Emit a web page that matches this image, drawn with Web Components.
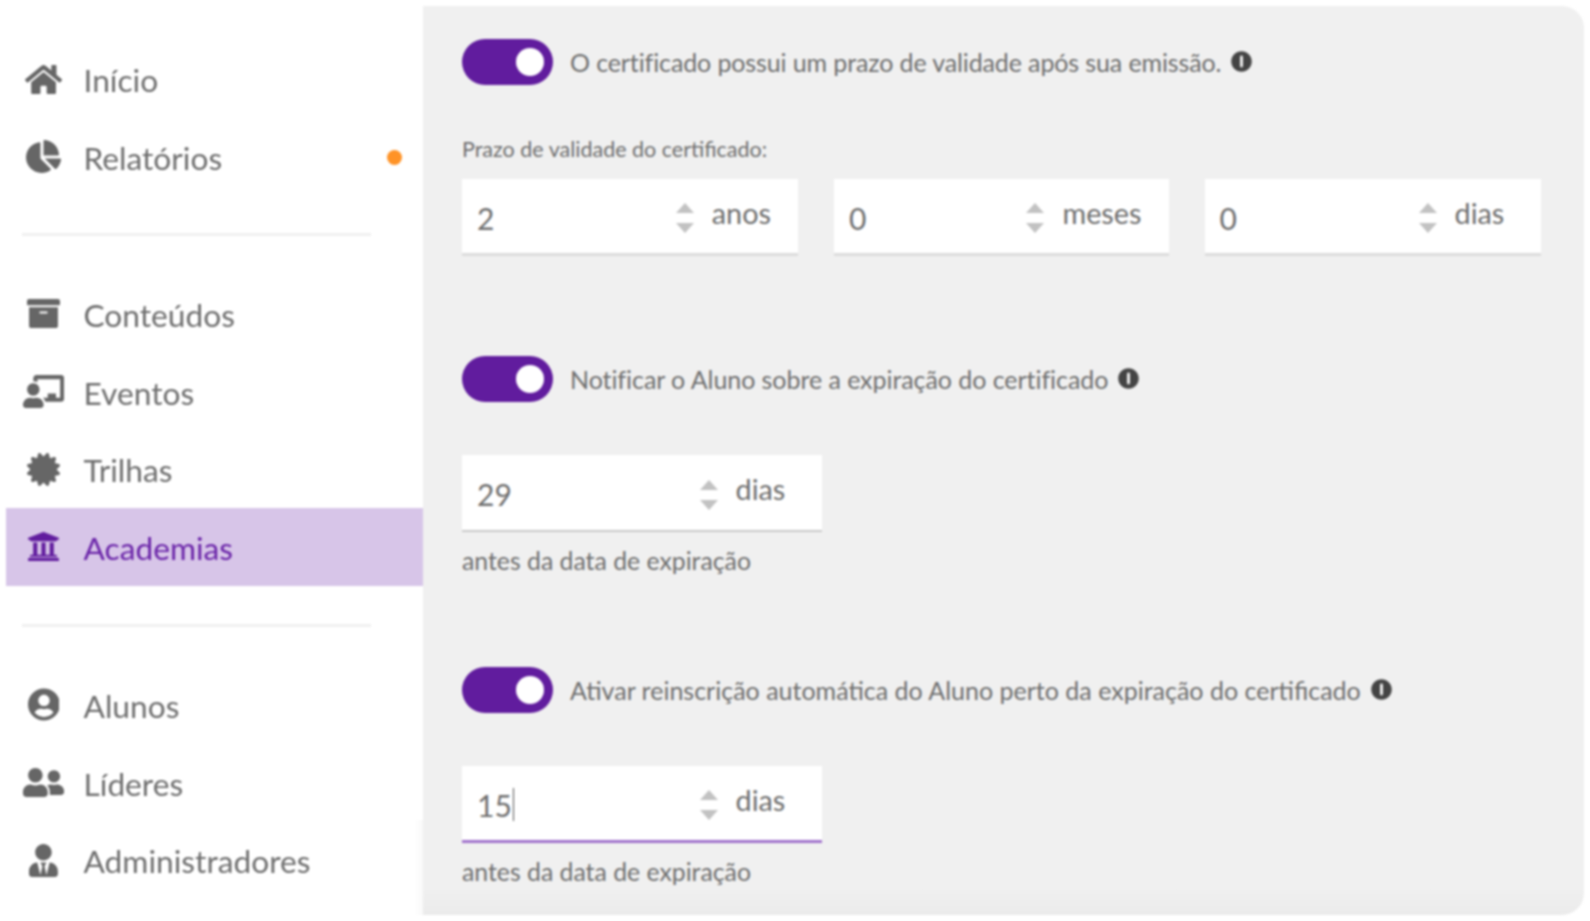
<!DOCTYPE html>
<html lang="pt-BR">
<head>
<meta charset="utf-8">
<title>Certificado</title>
<style>
  html, body { margin: 0; height: 100%; background: #fff; }
  body { font-family: Lato, "Noto Sans", sans-serif; color: #6e6e6e; overflow: hidden; }
</style>
</head>
<body>

<app-shell>
  <side-nav slot="nav">
    <nav-item icon="home">Início</nav-item>
    <nav-item icon="pie" dot>Relatórios</nav-item>
    <nav-rule></nav-rule>
    <nav-item icon="archive">Conteúdos</nav-item>
    <nav-item icon="teacher">Eventos</nav-item>
    <nav-item icon="certificate">Trilhas</nav-item>
    <nav-item icon="university" active>Academias</nav-item>
    <nav-rule style="margin-top:38px"></nav-rule>
    <nav-item icon="usercircle">Alunos</nav-item>
    <nav-item icon="friends">Líderes</nav-item>
    <nav-item icon="tie">Administradores</nav-item>
  </side-nav>

  <cert-panel>
    <cert-section>
      <cert-toggle style="letter-spacing:-.12px">O certificado possui um prazo de validade após sua emissão.</cert-toggle>
      <field-row label="Prazo de validade do certificado:">
        <num-field value="2" unit="anos" heavy></num-field>
        <num-field value="0" unit="meses" heavy></num-field>
        <num-field value="0" unit="dias" heavy></num-field>
      </field-row>
    </cert-section>

    <cert-section style="margin-top:100px">
      <cert-toggle style="letter-spacing:-.06px">Notificar o Aluno sobre a expiração do certificado</cert-toggle>
      <single-field hint="antes da data de expiração">
        <num-field value="29" unit="dias"></num-field>
      </single-field>
    </cert-section>

    <cert-section style="margin-top:91px">
      <cert-toggle>Ativar reinscrição automática do Aluno perto da expiração do certificado</cert-toggle>
      <single-field hint="antes da data de expiração">
        <num-field value="15" unit="dias" focused></num-field>
      </single-field>
    </cert-section>
  </cert-panel>
</app-shell>

<script>
// font-awesome style glyphs, [viewBox width, path]
const ICONS = {
  home: [576, 'M280.37 148.26L96 300.11V464a16 16 0 0 0 16 16l112.06-.29a16 16 0 0 0 15.92-16V368a16 16 0 0 1 16-16h64a16 16 0 0 1 16 16v95.64a16 16 0 0 0 16 16.05L464 480a16 16 0 0 0 16-16V300L295.67 148.26a12.19 12.19 0 0 0-15.3 0zM571.6 251.47L488 182.56V44.05a12 12 0 0 0-12-12h-56a12 12 0 0 0-12 12v72.61L318.47 43a48 48 0 0 0-61 0L4.34 251.47a12 12 0 0 0-1.6 16.9l25.5 31A12 12 0 0 0 45.15 301l235.22-193.74a12.19 12.19 0 0 1 15.3 0L530.9 301a12 12 0 0 0 16.9-1.6l25.5-31a12 12 0 0 0-1.7-16.93z'],
  pie: [544, 'M527.79 288H290.5l158.03 158.03c6.04 6.04 15.98 6.53 22.19.68 38.7-36.46 65.32-85.61 73.13-140.86 1.34-9.46-6.51-17.85-16.06-17.85zm-15.83-64.8C503.72 103.74 408.26 8.28 288.8.04 279.68-.59 272 7.1 272 16.24V240h223.77c9.14 0 16.82-7.68 16.19-16.8zM224 288V50.71c0-9.55-8.39-17.4-17.84-16.06C86.99 51.49-4.1 155.6.14 280.37 4.5 408.51 114.83 513.59 243.03 511.98c50.4-.63 96.97-16.87 135.26-44.03 7.9-5.6 8.42-17.23 1.57-24.08L224 288z'],
  archive: [512, 'M32 448c0 17.7 14.3 32 32 32h384c17.7 0 32-14.3 32-32V160H32v288zm160-212c0-6.6 5.4-12 12-12h104c6.6 0 12 5.4 12 12v8c0 6.6-5.4 12-12 12H204c-6.6 0-12-5.4-12-12v-8zM480 32H32C14.3 32 0 46.3 0 64v48c0 8.8 7.2 16 16 16h480c8.8 0 16-7.2 16-16V64c0-17.7-14.3-32-32-32z'],
  teacher: [640, 'M208 352c-2.39 0-4.78.35-7.06 1.09C187.98 357.3 174.35 360 160 360c-14.35 0-27.98-2.7-40.95-6.91-2.28-.74-4.66-1.09-7.05-1.09C49.94 352-.33 402.48 0 464.62.14 490.88 21.73 512 48 512h224c26.27 0 47.86-21.12 48-47.38.33-62.14-49.94-112.62-112-112.62zm-48-32c53.02 0 96-42.98 96-96s-42.98-96-96-96-96 42.98-96 96 42.98 96 96 96zM592 0H208c-26.47 0-48 22.25-48 49.59V96c23.42 0 45.1 6.78 64 17.8V64h352v288h-64v-64H384v64h-76.24c19.1 16.69 33.12 38.73 39.69 64H592c26.47 0 48-22.25 48-49.59V49.59C640 22.25 618.47 0 592 0z'],
  certificate: [512, 'M458.622 255.92l45.985-45.005c13.708-12.977 7.316-36.039-10.664-40.339l-62.65-15.99 17.661-62.015c4.991-17.838-11.829-34.663-29.661-29.671l-61.994 17.667-15.984-62.671C337.085.197 313.765-6.276 300.99 7.228L256 53.57 211.011 7.229c-12.63-13.351-36.047-7.234-40.325 10.668l-15.984 62.671-61.995-17.667C74.87 57.907 58.056 74.738 63.046 92.572l17.661 62.015-62.65 15.99C.069 174.878-6.31 197.944 7.392 210.915l45.985 45.005-45.985 45.004c-13.708 12.977-7.316 36.039 10.664 40.339l62.65 15.99-17.661 62.015c-4.991 17.838 11.829 34.663 29.661 29.671l61.994-17.667 15.984 62.671c4.439 18.575 27.696 24.018 40.325 10.668L256 458.61l44.989 46.001c12.5 13.488 35.987 7.486 40.325-10.668l15.984-62.671 61.994 17.667c17.836 4.994 34.651-11.837 29.661-29.671l-17.661-62.015 62.65-15.99c17.987-4.302 24.366-27.367 10.664-40.339l-45.984-45.004z'],
  university: [512, 'M496 128v16a8 8 0 0 1-8 8h-24v12c0 6.627-5.373 12-12 12H60c-6.627 0-12-5.373-12-12v-12H24a8 8 0 0 1-8-8v-16a8 8 0 0 1 4.941-7.392l232-88a7.996 7.996 0 0 1 6.118 0l232 88A8 8 0 0 1 496 128zm-24 304H40c-13.255 0-24 10.745-24 24v16a8 8 0 0 0 8 8h464a8 8 0 0 0 8-8v-16c0-13.255-10.745-24-24-24zM96 192v192H60c-6.627 0-12 5.373-12 12v20h416v-20c0-6.627-5.373-12-12-12h-36V192h-64v192h-64V192h-64v192h-64V192H96z'],
  usercircle: [496, 'M248 8C111 8 0 119 0 256s111 248 248 248 248-111 248-248S385 8 248 8zm0 96c48.6 0 88 39.4 88 88s-39.4 88-88 88-88-39.4-88-88 39.4-88 88-88zm0 344c-58.7 0-111.3-26.6-146.5-68.2 18.8-35.4 55.6-59.8 98.5-59.8 2.4 0 4.8.4 7.1 1.1 13 4.2 26.6 6.9 40.9 6.9 14.3 0 28-2.7 40.9-6.9 2.3-.7 4.7-1.1 7.1-1.1 42.9 0 79.7 24.4 98.5 59.8C359.3 421.4 306.7 448 248 448z'],
  friends: [640, 'M192 256c61.9 0 112-50.1 112-112S253.9 32 192 32 80 82.1 80 144s50.1 112 112 112zm76.8 32h-8.3c-20.8 10-43.9 16-68.5 16s-47.6-6-68.5-16h-8.3C51.6 288 0 339.6 0 403.2V432c0 26.5 21.5 48 48 48h288c26.5 0 48-21.5 48-48v-28.8c0-63.6-51.6-115.2-115.2-115.2zM480 256c53 0 96-43 96-96s-43-96-96-96-96 43-96 96 43 96 96 96zm48 32h-3.8c-13.9 4.8-28.6 8-44.2 8s-30.3-3.2-44.2-8H432c-20.4 0-39.2 5.9-55.7 15.4 24.4 26.3 39.7 61.2 39.7 99.8v38.4c0 2.2-.5 4.3-.6 6.4H592c26.5 0 48-21.5 48-48 0-61.9-50.1-112-112-112z'],
  tie: [448, 'M224 256c70.7 0 128-57.3 128-128S294.7 0 224 0 96 57.3 96 128s57.3 128 128 128zm95.8 32.6L272 480l-32-136 32-56h-96l32 56-32 136-47.8-191.4C56.9 292 0 350.3 0 422.4V464c0 26.5 21.5 48 48 48h352c26.5 0 48-21.5 48-48v-41.6c0-72.1-56.9-130.4-128.2-133.8z'],
  // dark disc with one upright white bar
  alert: [512, 'M506 256c0 138-112 250-250 250S6 394 6 256 118 6 256 6s250 112 250 250zM256 108c-20 0-36 16-36 36v224c0 20 16 36 36 36s36-16 36-36V144c0-20-16-36-36-36z']
};

function iconSvg(name, size) {
  const [w, d] = ICONS[name];
  return `<svg viewBox="0 0 ${w} 512" height="${size}" width="${size * w / 512}" fill="currentColor" aria-hidden="true"><path d="${d}"/></svg>`;
}

class AppShell extends HTMLElement {
  constructor() {
    super();
    this.attachShadow({ mode: 'open' });
    this.shadowRoot.innerHTML = `
      <style>
        :host {
          display: grid;
          grid-template-columns: 417px 1161px;
          height: 909px;
          padding: 6px;
          filter: blur(.8px);
        }
      </style>
      <slot name="nav"></slot>
      <slot></slot>
    `;
  }
}

class SideNav extends HTMLElement {
  constructor() {
    super();
    this.attachShadow({ mode: 'open' });
    this.shadowRoot.innerHTML = `
      <style>
        :host { display: block; padding-top: 35px; }
      </style>
      <slot></slot>
    `;
  }
}

class NavRule extends HTMLElement {
  constructor() {
    super();
    this.attachShadow({ mode: 'open' });
    this.shadowRoot.innerHTML = `
      <style>
        :host {
          display: block;
          height: 3px;
          margin: 37px 52px 39.5px 16px;
          background: #f0f0f0;
        }
      </style>
    `;
  }
}

class NavItem extends HTMLElement {
  constructor() {
    super();
    this.attachShadow({ mode: 'open' });
    const name = this.getAttribute('icon');
    this.shadowRoot.innerHTML = `
      <style>
        :host {
          display: flex;
          align-items: center;
          height: 77.6px;
          color: #6e6e6e;
          font: 400 31.7px/1 Lato, sans-serif;
        }
        :host([active]) { background: #d7c5e8; color: #6a24a8; }
        .ico {
          width: 75px;
          margin-right: 2.5px;
          display: flex;
          justify-content: center;
          margin-top: -1px;
        }
        .ico svg { display: block; color: #666; }
        :host([active]) .ico svg { color: #611c9e; }
        .txt { flex: 1; padding-top: 3px; }
        .dot {
          width: 15px;
          height: 15px;
          margin-right: 21px;
          border-radius: 50%;
          background: #ff9327;
          display: none;
        }
        :host([dot]) .dot { display: block; }
      </style>
      <span class="ico">${iconSvg(name, 33)}</span>
      <span class="txt"><slot></slot></span>
      <span class="dot"></span>
    `;
  }
}

class CertPanel extends HTMLElement {
  constructor() {
    super();
    this.attachShadow({ mode: 'open' });
    this.shadowRoot.innerHTML = `
      <style>
        :host {
          display: block;
          position: relative;
          padding: 33px 37px 0 39px;
          border-radius: 0 22px 22px 0;
          background: linear-gradient(to bottom, #f0f0f0 97%, #ebebeb 100%);
        }
        /* soft shade that falls over the nav at the bottom */
        :host::before {
          content: '';
          position: absolute;
          left: -9px;
          bottom: 0;
          width: 9px;
          height: 95px;
          background: linear-gradient(to right, rgba(0,0,0,0), rgba(0,0,0,.025));
        }
      </style>
      <slot></slot>
    `;
  }
}

class CertSection extends HTMLElement {
  constructor() {
    super();
    this.attachShadow({ mode: 'open' });
    this.shadowRoot.innerHTML = `
      <style>
        :host { display: block; }
      </style>
      <slot></slot>
    `;
  }
}

class CertToggle extends HTMLElement {
  constructor() {
    super();
    this.attachShadow({ mode: 'open' });
    this.shadowRoot.innerHTML = `
      <style>
        :host {
          display: flex;
          align-items: center;
          height: 46px;
          color: #6e6e6e;
          font: 400 25px/1 Lato, sans-serif;
        }
        .track {
          flex: none;
          width: 91px;
          height: 46px;
          box-sizing: border-box;
          margin-right: 17px;
          padding-right: 9px;
          display: flex;
          align-items: center;
          justify-content: flex-end;
          border-radius: 23px;
          background: #611c9e;
        }
        .knob { width: 28px; height: 28px; border-radius: 50%; background: #fff; }
        .info { display: flex; color: #444; margin-left: 10px; margin-top: -2px; }
        .info svg { display: block; }
      </style>
      <span class="track"><span class="knob"></span></span>
      <span><slot></slot></span>
      <span class="info">${iconSvg('alert', 21)}</span>
    `;
  }
}

class FieldRow extends HTMLElement {
  constructor() {
    super();
    this.attachShadow({ mode: 'open' });
    this.shadowRoot.innerHTML = `
      <style>
        :host { display: block; margin-top: 49px; }
        .lbl { display: block; font: 400 21.5px/30px Lato, sans-serif; color: #6e6e6e; margin-bottom: 15px; }
        .row { display: grid; grid-template-columns: 336px 334.5px 336px; gap: 36px; }
      </style>
      <span class="lbl">${this.getAttribute('label')}</span>
      <div class="row"><slot></slot></div>
    `;
  }
}

class SingleField extends HTMLElement {
  constructor() {
    super();
    this.attachShadow({ mode: 'open' });
    this.shadowRoot.innerHTML = `
      <style>
        :host { display: block; margin-top: 53px; width: 359.5px; }
        .hint { display: block; margin-top: 14px; font: 400 24.8px/30px Lato, sans-serif; color: #6e6e6e; white-space: nowrap; }
      </style>
      <slot></slot>
      <span class="hint">${this.getAttribute('hint')}</span>
    `;
  }
}

class NumField extends HTMLElement {
  constructor() {
    super();
    this.attachShadow({ mode: 'open' });
    this.shadowRoot.innerHTML = `
      <style>
        :host {
          display: flex;
          align-items: center;
          box-sizing: border-box;
          height: 77px;
          padding: 0 27px 0 15px;
          background: #fff;
          border-bottom: 2px solid #c9c9c9;
          color: #6e6e6e;
          font: 400 30px/1 Lato, sans-serif;
        }
        :host([heavy]) { border-bottom: 3px solid #dcdcdc; }
        :host([focused]) { border-bottom: 3px solid #a173cc; }
        .val { flex: 1; padding-top: 3px; display: flex; align-items: center; }
        .caret { display: none; width: 1.5px; height: 33px; margin-left: 1px; background: #555; }
        :host([focused]) .caret { display: block; }
        .spin { flex: none; width: 18px; display: flex; flex-direction: column; gap: 10px; margin: 4px 18px 0 0; }
        .spin svg { display: block; }
        .unit { flex: none; min-width: 59px; font-size: 28.8px; padding-bottom: 6px; }
      </style>
      <span class="val">${this.getAttribute('value')}<span class="caret"></span></span>
      <span class="spin">
        <svg viewBox="0 0 18 10" width="18" height="10"><path d="M9 0L18 10H0z" fill="#c2c2c2"/></svg>
        <svg viewBox="0 0 18 10" width="18" height="10"><path d="M0 0H18L9 10z" fill="#c2c2c2"/></svg>
      </span>
      <span class="unit">${this.getAttribute('unit')}</span>
    `;
  }
}

customElements.define('app-shell', AppShell);
customElements.define('side-nav', SideNav);
customElements.define('nav-rule', NavRule);
customElements.define('nav-item', NavItem);
customElements.define('cert-panel', CertPanel);
customElements.define('cert-section', CertSection);
customElements.define('cert-toggle', CertToggle);
customElements.define('field-row', FieldRow);
customElements.define('single-field', SingleField);
customElements.define('num-field', NumField);
</script>
</body>
</html>
